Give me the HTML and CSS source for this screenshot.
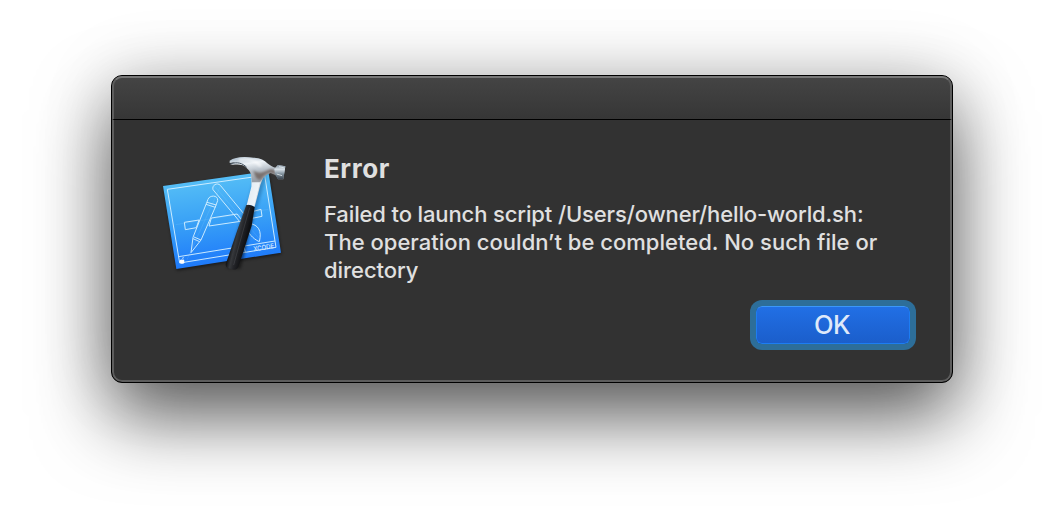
FILE: index.html
```html
<!DOCTYPE html>
<html lang="en">
<head>
<meta charset="utf-8">
<title>Error</title>
<link rel="stylesheet" href="styles.css">
</head>
<body>
<main class="dialog" role="alertdialog" aria-labelledby="title">
  <div class="titlebar"></div>
  <div class="content">
    <svg class="app-icon" viewBox="0 0 420 405" aria-hidden="true">
      <defs>
        <linearGradient id="sheet" x1=".4" y1="0" x2=".55" y2="1">
          <stop offset="0" stop-color="#5ac3f6"/><stop offset=".5" stop-color="#38a0f6"/><stop offset="1" stop-color="#1a74fb"/>
        </linearGradient>
        <linearGradient id="head" gradientUnits="userSpaceOnUse" x1="290" y1="36" x2="300" y2="106">
          <stop offset="0" stop-color="#b9c8d5"/><stop offset=".25" stop-color="#edf2f6"/><stop offset=".6" stop-color="#b6bfc8"/><stop offset="1" stop-color="#9a9fa6"/>
        </linearGradient>
        <linearGradient id="neck" gradientUnits="userSpaceOnUse" x1="278" y1="120" x2="320" y2="130">
          <stop offset="0" stop-color="#8f9ba7"/><stop offset=".3" stop-color="#e5edf4"/><stop offset=".75" stop-color="#eef3f7"/><stop offset="1" stop-color="#8a949e"/>
        </linearGradient>
        <linearGradient id="grip" gradientUnits="userSpaceOnUse" x1="235" y1="265" x2="276" y2="275">
          <stop offset="0" stop-color="#101113"/><stop offset=".3" stop-color="#36383c"/><stop offset=".6" stop-color="#222327"/><stop offset="1" stop-color="#101114"/>
        </linearGradient>
        <linearGradient id="face" x1="0" y1="0" x2="0" y2="1">
          <stop offset="0" stop-color="#7d8d9b"/><stop offset=".3" stop-color="#d9e2e9"/><stop offset=".6" stop-color="#8595a1"/><stop offset="1" stop-color="#39434d"/>
        </linearGradient>
        <clipPath id="sheetClip"><path d="M24 123 340 78 378 323 64 372Z"/></clipPath>
        <filter id="soft" x="-30%" y="-30%" width="160%" height="160%"><feGaussianBlur stdDeviation="5"/></filter>
        <filter id="polish" x="-20%" y="-20%" width="140%" height="140%" color-interpolation-filters="sRGB"><feGaussianBlur stdDeviation="3"/></filter>
      </defs>
      <path class="cast" d="M26 127 342 82 380 328 65 377Z"/>
      <path fill="url(#sheet)" d="M24 123 340 78 378 323 64 372Z"/>
      <g class="lines">
        <path d="M37 133 329 91 363 307 74 354Z"/>
        <path d="M71 335 360 288M267 303 271 322"/>
        <path d="M88 232 132 225 124 248 91 254ZM169 219 246 207 263 228 162 243ZM294 199 318 193 321 214 291 220Z"/>
        <path d="M159 163C163 150 190 149 188 167L181 186 138 285 108 323 114 277ZM156 172 184 180M153 178 181 187M117 276 138 285M114 281 134 290"/>
        <path d="M174 134C170 121 186 111 196 121L276 218 256 232ZM285 236C308 239 322 256 313 290 293 281 277 263 276 245Z"/>
        <path class="faint" d="M62 239 340 193M96 344 199 117M168 111 338 311"/>
      </g>
      <text class="icon-label" transform="translate(296 319) rotate(-9)" textLength="63" lengthAdjust="spacingAndGlyphs">XCODE</text>
      <path class="apple" d="M82 342q5-1 4-6-5 1-4 6M75 345q4-3 7-1 4-2 6 2-2 3 1 6-4 6-7 4-5 2-8-4-1-5 1-7Z"/>
      <g clip-path="url(#sheetClip)"><path class="hammer-shade" d="M301 90 335 92 285 262 259 378 222 374 243 270 280 165Z"/></g>
      <path class="cast" d="M274 185 298 188 257 371 215 370Z"/>
      <path fill="url(#grip)" d="M274 180Q286 178 299 186L290 242 251 363Q248 375 235 374L220 370Q209 366 213 355L246 259Z"/>
      <path class="grip-shine" d="M284 188 263 262 236 360"/>
      <path fill="url(#neck)" d="M289 80 336 80Q318 106 313 132L299 185Q287 178 275 180L289 125Z"/>
      <path fill="url(#head)" d="M224 47C239 37 262 34 295 38 315 39 329 45 337 55 346 61 352 67 361 68L369 60 391 64 385 103 369 103 363 91 347 84C333 88 322 99 315 112L290 112C294 88 281 70 263 61 249 56 234 61 226 58L240 52 224 54Z"/>
      <path class="claw-edge" d="M226 57C247 49 263 55 275 67"/>
      <path class="head-shine" d="M252 44C280 39 302 46 318 64" filter="url(#polish)"/>
      <path class="cheek" d="M294 76Q306 86 323 82L348 72 358 75 363 90 347 83Q329 86 315 105L303 98Z" filter="url(#polish)"/>
      <path fill="url(#face)" d="M369 60 391 64 385 103 369 103 361 90 358 72Z"/>
      <path class="face-shine" d="M372 65 386 68M365 87 381 92"/>
    </svg>
    <div class="message">
      <h1 class="title" id="title">Error</h1>
      <p class="text"><span class="line line-a">Failed to launch script /Users/owner/hello-world.sh:</span><span class="line line-b">The operation couldn’t be completed. No such file or</span><span class="line line-c">directory</span></p>
      <button class="ok" type="button">OK</button>
    </div>
  </div>
</main>
</body>
</html>
```

FILE: styles.css
```css
* { box-sizing: border-box; }
body {
  margin: 0;
  height: 530px;
  padding: 75px 111px;
  overflow: hidden;
  background: #fff;
  font-family: Inter, "Liberation Sans", sans-serif;
}
.dialog {
  width: 842px;
  height: 308px;
  border: 1px solid #000;
  border-radius: 11px;
  background: #323232;
  color: #e0e0e0;
  box-shadow: inset 0 0 0 2px #5d5d5d, 0 34px 74px rgba(0, 0, 0, .62), 0 0 70px rgba(0, 0, 0, .15);
}
.titlebar {
  height: 44px;
  border: 2px solid #5d5d5d;
  border-top-color: #777;
  border-bottom: 1px solid #000;
  border-radius: 10px 10px 0 0;
  background: linear-gradient(#444, #363636);
}
.content {
  display: flex;
  height: 262px;
  padding: 25px 36px 0 43px;
}
.app-icon { flex: none; width: 140px; height: 135px; }
.message {
  display: flex;
  flex: 1;
  flex-direction: column;
  padding: 8px 0 0 29px;
}
.title {
  margin: 0;
  font-size: 26px;
  font-weight: 700;
  line-height: 32px;
  letter-spacing: .55px;
}
.text {
  margin: 15px 0 0;
  font-size: 22px;
  font-weight: 450;
  line-height: 28px;
  white-space: nowrap;
}
.line { display: block; }
.line-a { letter-spacing: -.13px; }
.line-b { letter-spacing: .02px; }
.line-c { letter-spacing: -.05px; }
.ok {
  align-self: flex-end;
  width: 154px;
  height: 38px;
  margin: 22px 6px 0 0;
  padding: 0 2px 0 0;
  border: 1px solid #1d7df2;
  border-top-color: #3b97fa;
  border-radius: 6px;
  background: linear-gradient(#216fe5, #1b5ecb);
  box-shadow: 0 0 0 6px #2d6e99;
  color: #dfe9fa;
  font: 500 25.5px/36px Inter, "Liberation Sans", sans-serif;
  letter-spacing: -.6px;
}
.lines { fill: none; stroke: #d7f1ff; stroke-width: 3; stroke-linejoin: round; opacity: .92; }
.faint { stroke-width: 1; opacity: .35; }
.icon-label { fill: #d7eaff; font: 500 20px Inter, sans-serif; }
.apple { fill: #fff; }
.cast { fill: #000; opacity: .45; filter: url(#soft); }
.hammer-shade { fill: #063363; opacity: .3; filter: url(#soft); }
.grip-shine { fill: none; stroke: #777a80; stroke-width: 3; opacity: .25; }
.claw-edge { fill: none; stroke: #465461; stroke-width: 3; }
.head-shine { fill: none; stroke: #fff; stroke-width: 8; opacity: .6; }
.cheek { fill: #66564f; opacity: .7; }
.face-shine { fill: none; stroke: #e6edf2; stroke-width: 3; opacity: .8; }
```
